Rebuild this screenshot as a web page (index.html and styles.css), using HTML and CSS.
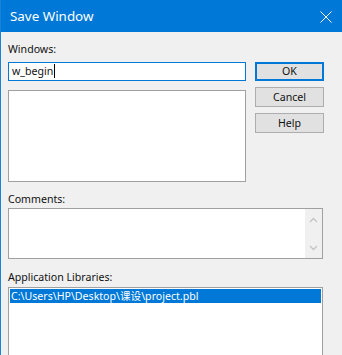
FILE: index.html
```html
<!DOCTYPE html>
<html>
<head>
	<title>Save Window</title>
	<link rel="stylesheet" href="styles.css">
</head>
<body>
	<div class="window">
		<div class="titlebar">
			<span class="title">Save Window</span>
			<svg class="close" width="12" height="12" viewBox="0 0 12 12">
				<path d="M0.5 0.5 L11.5 11.5 M11.5 0.5 L0.5 11.5" stroke="#fff" stroke-width="1" fill="none"/>
			</svg>
		</div>
		<div class="content">
			<div class="top">
				<div class="leftCol">
					<div class="label labelFirst">Windows:</div>
					<div class="input"><span class="caret">w_begin</span></div>
					<div class="list"></div>
				</div>
				<div class="buttons">
					<div class="btn btnDefault">OK</div>
					<div class="btn">Cancel</div>
					<div class="btn">Help</div>
				</div>
			</div>

			<div class="label labelComments">Comments:</div>
			<div class="comments">
				<div class="scroll">
					<svg width="9" height="6" viewBox="0 0 9 6"><path d="M1 5 L4.5 1.5 L8 5" stroke="#c4c4c4" stroke-width="1.3" fill="none"/></svg>
					<svg width="9" height="6" viewBox="0 0 9 6"><path d="M1 1 L4.5 4.5 L8 1" stroke="#c4c4c4" stroke-width="1.3" fill="none"/></svg>
				</div>
			</div>

			<div class="label labelLibs">Application Libraries:</div>
			<div class="libs">
				<div class="libRow">C:\Users\HP\Desktop\课设\project.pbl</div>
			</div>
		</div>
	</div>
</body>
</html>
```

FILE: styles.css
```css
	body{
		margin: 0;
		background: #f0f0f0;
		font-family: "Noto Sans", "Noto Sans CJK SC", sans-serif;
		font-size: 10.6px;
		color: #111;
	}
	.window{
		border-left: 1px solid #1883d7;
		height: 355px;
		overflow: hidden;
	}
	.titlebar{
		height: 32px;
		background: #0078d7;
		display: flex;
		align-items: center;
		justify-content: space-between;
		padding: 0 10px 0 9px;
	}
	.title{
		color: #fff;
		font-size: 13.4px;
	}
	.close{
		margin-top: 1px;
	}
	.content{
		padding: 0 0 0 7px;
	}
	.top{
		display: flex;
	}
	.leftCol{
		width: 238px;
	}
	.label{
		line-height: 16px;
		height: 16px;
	}
	.labelFirst{
		margin-top: 9px;
		margin-bottom: 5px;
	}
	.input{
		height: 17px;
		border: 1px solid #0078d7;
		background: #fff;
		line-height: 17px;
		padding-left: 3px;
	}
	.caret{
		border-right: 1px solid #000;
		padding-right: 1px;
	}
	.list{
		margin-top: 9px;
		height: 90px;
		border: 1px solid #a0a0a0;
		background: #fff;
	}
	.buttons{
		margin-left: 9px;
		padding-top: 30px;
		width: 69px;
		display: flex;
		flex-direction: column;
		gap: 6px;
	}
	.btn{
		height: 18px;
		line-height: 18px;
		border: 1px solid #adadad;
		background: #e1e1e1;
		text-align: center;
	}
	.btnDefault{
		height: 17px;
		line-height: 17px;
		border: 1px solid #0078d7;
		box-shadow: inset 0 0 0 1px #0078d7;
	}
	.labelComments{
		margin-top: 9px;
		margin-bottom: 1px;
	}
	.comments{
		width: 313px;
		height: 49px;
		border: 1px solid #a0a0a0;
		background: #fff;
		display: flex;
		justify-content: flex-end;
	}
	.scroll{
		width: 17px;
		background: #f0f0f0;
		display: flex;
		flex-direction: column;
		justify-content: space-between;
		align-items: center;
		padding: 8px 0 7px;
	}
	.scroll svg{
		display: block;
	}
	.labelLibs{
		margin-top: 10px;
		margin-bottom: 2px;
	}
	.libs{
		width: 313px;
		height: 80px;
		border: 1px solid #a0a0a0;
		background: #fff;
		padding: 1px 0 0 0;
	}
	.libRow{
		margin: 0 1px;
		height: 14px;
		line-height: 14px;
		background: #0078d7;
		color: #fff;
		padding-left: 1px;
	}
```
